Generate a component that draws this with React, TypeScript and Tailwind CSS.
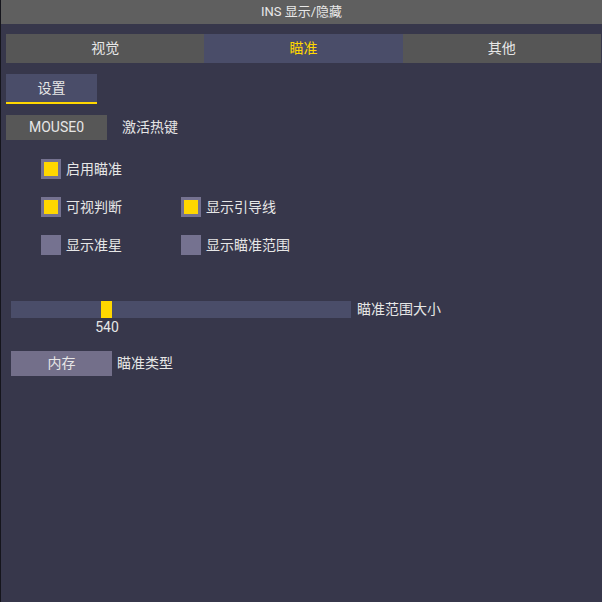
export default function App() {
  const font = { fontFamily: 'Roboto, "Noto Sans CJK SC", "Noto Sans", sans-serif' }
  return (
    <div
      className="w-[602px] h-[602px] bg-[#37374b] border-l border-[#15151c] text-[#e6e6e6] flex flex-col overflow-hidden"
      style={font}
    >
      {/* title bar */}
      <div className="h-[24px] bg-[#5f5f5f] flex items-center justify-center text-[13px] text-[#e8e8e8] shrink-0">
        INS 显示/隐藏
      </div>

      {/* tabs */}
      <div className="mt-[10px] ml-[5px] mr-[1px] flex h-[29px] text-[14px]">
        <div className="flex-1 bg-[#565656] flex items-center justify-center">视觉</div>
        <div className="flex-1 bg-[#4a4d69] flex items-center justify-center text-[#ffd700]">瞄准</div>
        <div className="flex-1 bg-[#565656] flex items-center justify-center">其他</div>
      </div>

      {/* sub tab */}
      <div className="mt-[11px] ml-[5px] w-[91px] h-[30px] bg-[#4a4d69] border-b-[2px] border-[#ffd700] flex items-center justify-center text-[14px]">
        设置
      </div>

      {/* hotkey */}
      <div className="mt-[11px] ml-[5px] flex items-center h-[25px] text-[14px]">
        <div className="w-[101px] h-full bg-[#575757] flex items-center justify-center">MOUSE0</div>
        <span className="ml-[15px]">激活热键</span>
      </div>

      {/* checkboxes */}
      <div className="mt-[19px] ml-[40px] flex flex-col gap-[18px] text-[14px]">
        <div className="flex">
          <Check on label="启用瞄准" />
        </div>
        <div className="flex">
          <Check on label="可视判断" />
          <Check on label="显示引导线" />
        </div>
        <div className="flex">
          <Check label="显示准星" />
          <Check label="显示瞄准范围" />
        </div>
      </div>

      {/* slider */}
      <div className="mt-[46px] ml-[10px] flex items-start text-[14px]">
        <div className="flex flex-col">
          <div className="w-[340px] h-[17px] bg-[#4a4d69] flex">
            <div className="w-[90px]" />
            <div className="w-[11px] h-full bg-[#ffd700]" />
          </div>
          <div className="w-[192px] text-center text-[14px] leading-[16px] mt-[1px]">540</div>
        </div>
        <span className="ml-[6px] leading-[17px]">瞄准范围大小</span>
      </div>

      {/* aim type */}
      <div className="mt-[16px] ml-[10px] flex items-center h-[25px] text-[14px]">
        <div className="w-[101px] h-full bg-[#736f8a] flex items-center justify-center">内存</div>
        <span className="ml-[5px]">瞄准类型</span>
      </div>
    </div>
  )
}

function Check({ on, label }: { on?: boolean; label: string }) {
  return (
    <div className="w-[140px] flex items-center h-[20px]">
      <div
        className={
          on
            ? 'w-[20px] h-[20px] bg-[#ffd700] border-[3px] border-[#757290]'
            : 'w-[20px] h-[20px] bg-[#757290]'
        }
      />
      <span className="ml-[5px]">{label}</span>
    </div>
  )
}
